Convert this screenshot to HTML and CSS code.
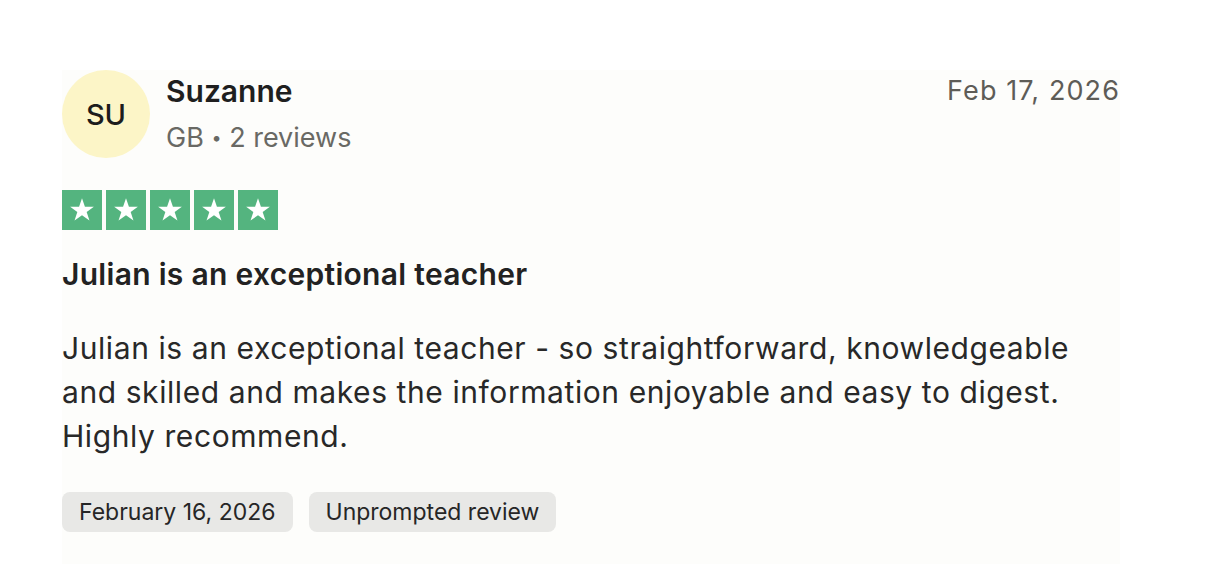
FILE: index.html
```html
<!DOCTYPE html>
<html lang="en">
<head>
<meta charset="utf-8">
<title>Review</title>
<link rel="stylesheet" href="styles.css">
</head>
<body>
<article class="card">
  <header class="head">
    <div class="avatar">SU</div>
    <div class="who">
      <div class="name">Suzanne</div>
      <div class="meta">GB <span class="dot">•</span> 2 reviews</div>
    </div>
    <time class="date">Feb 17, 2026</time>
  </header>
  <div class="stars">
    <span class="star"><svg viewBox="0 0 24 24"><path d="M12 3.2l2.2 6.4h6.7l-5.4 3.9 2.1 6.4L12 16l-5.6 3.9 2.1-6.4-5.4-3.9h6.7z"/></svg></span>
    <span class="star"><svg viewBox="0 0 24 24"><path d="M12 3.2l2.2 6.4h6.7l-5.4 3.9 2.1 6.4L12 16l-5.6 3.9 2.1-6.4-5.4-3.9h6.7z"/></svg></span>
    <span class="star"><svg viewBox="0 0 24 24"><path d="M12 3.2l2.2 6.4h6.7l-5.4 3.9 2.1 6.4L12 16l-5.6 3.9 2.1-6.4-5.4-3.9h6.7z"/></svg></span>
    <span class="star"><svg viewBox="0 0 24 24"><path d="M12 3.2l2.2 6.4h6.7l-5.4 3.9 2.1 6.4L12 16l-5.6 3.9 2.1-6.4-5.4-3.9h6.7z"/></svg></span>
    <span class="star"><svg viewBox="0 0 24 24"><path d="M12 3.2l2.2 6.4h6.7l-5.4 3.9 2.1 6.4L12 16l-5.6 3.9 2.1-6.4-5.4-3.9h6.7z"/></svg></span>
  </div>
  <h2 class="title">Julian is an exceptional teacher</h2>
  <p class="body">Julian is an exceptional teacher - so straightforward, knowledgeable and skilled and makes the information enjoyable and easy to digest. Highly recommend.</p>
  <div class="tags">
    <span class="tag">February 16, 2026</span>
    <span class="tag">Unprompted review</span>
  </div>
</article>
</body>
</html>
```

FILE: styles.css
```css
html, body {
  margin: 0;
  padding: 0;
  background: #ffffff;
  overflow: hidden;
}
body {
  font-family: Inter, "Liberation Sans", sans-serif;
  color: #1f1f1f;
  padding: 70px 100px 0 62px;
}
.card {
  background: #fdfdfb;
  width: 1058px;
  min-height: 520px;
}
.head {
  display: flex;
  align-items: flex-start;
}
.avatar {
  width: 88px;
  height: 88px;
  border-radius: 50%;
  background: #fcf5c7;
  display: flex;
  align-items: center;
  justify-content: center;
  font-size: 29px;
  font-weight: 500;
  color: #1c1c1c;
  flex: none;
}
.who {
  margin-left: 16px;
  flex: 1;
  padding-top: 3px;
}
.name {
  font-size: 30px;
  font-weight: 600;
  line-height: 36px;
  color: #1f1f1f;
}
.meta {
  font-size: 27px;
  line-height: 36px;
  margin-top: 11px;
  color: #696964;
}
.dot { font-size: 18px; vertical-align: 3px; }
.date {
  font-size: 27px;
  letter-spacing: 1.1px;
  line-height: 36px;
  color: #5e5c57;
  padding-top: 3px;
}
.stars {
  display: flex;
  gap: 4px;
  margin-top: 32px;
}
.star {
  width: 40px;
  height: 40px;
  background: #54b47f;
  display: flex;
  align-items: center;
  justify-content: center;
}
.star svg {
  width: 32px;
  height: 32px;
  fill: #ffffff;
}
.title {
  margin: 26px 0 0;
  font-size: 30px;
  font-weight: 600;
  letter-spacing: 0.3px;
  line-height: 36px;
  color: #222222;
}
.body {
  margin: 34px 0 0;
  font-size: 30px;
  letter-spacing: 0.58px;
  line-height: 44px;
  color: #282828;
  max-width: 1040px;
}
.tags {
  display: flex;
  gap: 16px;
  margin-top: 34px;
}
.tag {
  background: #e8e8e6;
  border-radius: 8px;
  height: 40px;
  padding: 0 17px;
  display: flex;
  align-items: center;
  font-size: 23px;
  color: #262626;
}
```
